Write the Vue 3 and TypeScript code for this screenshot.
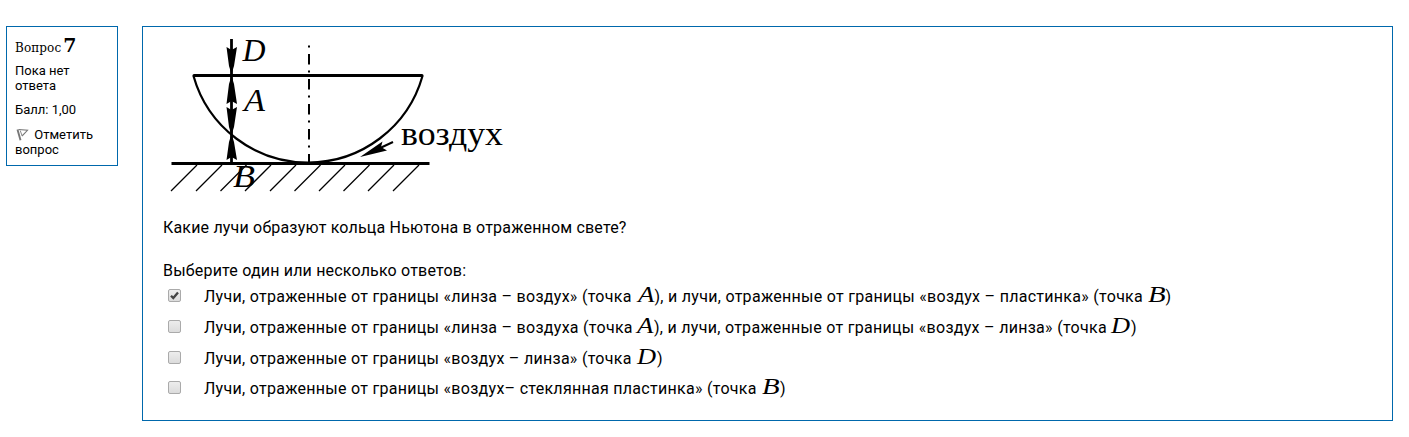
<script setup lang="ts">
interface Part {
  text: string
  width: number
  symbol?: string
}

interface Answer {
  checked: boolean
  parts: Part[]
}

const answers: Answer[] = [
  {
    checked: true,
    parts: [
      { text: 'Лучи, отраженные от границы «линза – воздух» (точка', width: 433.5, symbol: 'A' },
      { text: '), и лучи, отраженные от границы «воздух – пластинка» (точка', width: 493, symbol: 'B' },
      { text: ')', width: 6 },
    ],
  },
  {
    checked: false,
    parts: [
      { text: 'Лучи, отраженные от границы «линза – воздуха (точка', width: 433, symbol: 'A' },
      { text: '), и лучи, отраженные от границы «воздух – линза» (точка', width: 457, symbol: 'D' },
      { text: ')', width: 6 },
    ],
  },
  {
    checked: false,
    parts: [
      { text: 'Лучи, отраженные от границы «воздух – линза» (точка', width: 433, symbol: 'D' },
      { text: ')', width: 6 },
    ],
  },
  {
    checked: false,
    parts: [
      { text: 'Лучи, отраженные от границы «воздух– стеклянная пластинка» (точка', width: 558, symbol: 'B' },
      { text: ')', width: 6 },
    ],
  },
]

const hatches: number[] = [171, 196, 220.5, 245, 270, 294.5, 319, 343.5, 368, 393]
</script>

<template>
  <main class="question">
    <aside class="info">
      <h3 class="number">Вопрос <b>7</b></h3>
      <p class="state">Пока нет<br />ответа</p>
      <p class="grade">Балл: 1,00</p>
      <p class="flag">
        <svg class="flag-icon" width="13" height="13" viewBox="0 0 13 13">
          <path d="M1.500 1.500 L4.500 12.300" fill="none" stroke="#777" stroke-width="1.900" />
          <path d="M2.500 1.500 L11.500 2.300 L6 8" fill="none" stroke="#777" stroke-width="1.100" />
          <path d="M4.200 2.500 L6.200 8" fill="none" stroke="#888" stroke-width="1" />
        </svg>
        Отметить<br />вопрос
      </p>
    </aside>

    <section class="content">
      <svg class="diagram" width="350" height="160" viewBox="163 36 350 160">
        <g fill="none" stroke="#000">
          <path d="M194 75.500 H422" stroke-width="3" stroke-linecap="round" />
          <path d="M193.500 76 A119 119 0 0 0 422.500 76" stroke-width="2.200" />
          <path d="M171.500 163.500 H429.500" stroke-width="3" />
          <path d="M231.500 39 V163" stroke-width="2.800" />
          <path d="M309 45.500 V163" stroke-width="2" stroke-dasharray="2 6.500 10.500 6" />
          <path v-for="x in hatches" :key="x" :d="`M${x} 191 L${x + 26} 165`" stroke-width="1.300" />
          <path d="M393 142 L378 149" stroke-width="2" />
        </g>
        <g fill="#000">
          <path d="M231.500 74 L229 66 L226.500 47 L231.500 50 L237 47 L234 66 Z" />
          <path d="M231.500 76 L229 84 L226.500 104 L231.500 101 L237 104 L234 84 Z" />
          <path d="M231.500 135 L229 127 L226.500 107 L231.500 110 L237 107 L234 127 Z" />
          <path d="M231.500 134 L229 142 L226.500 160 L231.500 157 L237 160 L234 142 Z" />
          <path d="M360 157 L382.500 141.500 L381 147 L387 150.500 Z" />
        </g>
        <g class="labels">
          <text x="242.500" y="61" textLength="23" lengthAdjust="spacingAndGlyphs">D</text>
          <text x="244" y="111" textLength="21" lengthAdjust="spacingAndGlyphs">A</text>
          <text x="233" y="187" textLength="22" lengthAdjust="spacingAndGlyphs">B</text>
          <text class="air" x="401" y="145" textLength="102" lengthAdjust="spacingAndGlyphs">воздух</text>
        </g>
      </svg>

      <p class="prompt">Какие лучи образуют кольца Ньютона в отраженном свете?</p>
      <p class="hint">Выберите один или несколько ответов:</p>

      <div class="answers">
        <div v-for="(answer, i) in answers" :key="i" class="answer">
          <span class="box" role="checkbox" :aria-checked="answer.checked">
            <svg v-if="answer.checked" width="11" height="11" viewBox="0 0 11 11">
              <path d="M2 5.700 L4.300 8.100 L9 2.500" fill="none" stroke="#444" stroke-width="2.300" />
            </svg>
          </span>
          <template v-for="(part, p) in answer.parts" :key="p">
            <span class="words" :style="{ width: part.width + 'px' }">{{ part.text }}</span>
            <i v-if="part.symbol" class="symbol" :class="part.symbol.toLowerCase()">{{ part.symbol }}</i>
          </template>
        </div>
      </div>
    </section>
  </main>
</template>

<style>
body {
  background: #fff;
}
</style>

<style scoped>
.question {
  box-sizing: border-box;
  display: flex;
  align-items: flex-start;
  gap: 24px;
  height: 437px;
  padding: 26px 16px 0 6px;
  font-family: Roboto, "Noto Sans", sans-serif;
  color: #000;
}

.info {
  box-sizing: border-box;
  width: 112px;
  height: 140px;
  padding: 9px 8px 0;
  border: 1px solid #0068ac;
  font-size: 13px;
  line-height: 15px;
}

.info p {
  margin: 0 0 9px;
}

.info .grade {
  margin-bottom: 10px;
}

.number {
  height: 22px;
  margin: 0 0 5px;
  font: 12px/22px "DejaVu Serif", serif;
  letter-spacing: 0.1px;
  white-space: nowrap;
}

.number b {
  margin-left: -2px;
  font: bold 19px/19px "DejaVu Serif", serif;
}

.flag-icon {
  margin: 0 2px 0 1px;
  vertical-align: -2px;
}

.content {
  box-sizing: border-box;
  width: 1251px;
  height: 395px;
  padding: 9px 20px 0;
  border: 1px solid #0068ac;
  font-size: 16px;
  line-height: 24px;
  letter-spacing: 0.185px;
}

.diagram {
  display: block;
  overflow: visible;
  letter-spacing: 0;
}

.labels {
  font: italic 32px "Liberation Serif", serif;
}

.air {
  font-style: normal;
  font-size: 34px;
}

.prompt {
  margin: 20px 0 0;
}

.hint {
  margin: 19px 0 0;
}

.answer {
  display: flex;
  align-items: baseline;
  height: 31px;
  padding-left: 6px;
  line-height: 24px;
}

.answer:nth-child(3) {
  height: 30px;
}

.box {
  box-sizing: border-box;
  flex: none;
  align-self: flex-start;
  width: 13px;
  height: 13px;
  margin: 6px 22px 0 -1px;
  border: 1px solid #aaa;
  border-radius: 2px;
  background: linear-gradient(#ededed, #dcdcdc);
}

.box + .words {
  margin-left: 1px;
}

.box svg {
  display: block;
}

.words {
  flex: none;
  letter-spacing: 0.285px;
  white-space: nowrap;
}

.symbol {
  flex: none;
  font: italic 24px/22px "Liberation Serif", serif;
  letter-spacing: 0;
  transform-origin: left;
}

.symbol.a {
  width: 17px;
  transform: scaleX(1.12);
}

.symbol.b {
  width: 18px;
  transform: scaleX(1.2);
}

.symbol.d {
  width: 20px;
  transform: scaleX(1.1);
}
</style>
